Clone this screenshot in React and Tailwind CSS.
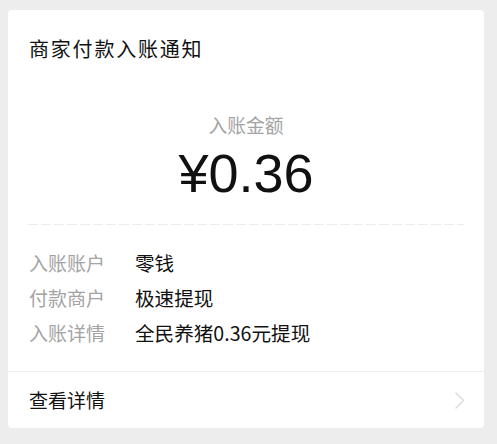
import React from "react";

const font = { fontFamily: '"Noto Sans CJK SC", "Noto Sans", sans-serif' };

function Row({ label, value }) {
  return (
    <div className="flex items-center h-[35px]">
      <div className="w-[106px] text-[19px] text-[#a3a3a3]">{label}</div>
      <div className="text-[19.6px] text-[#111111]">{value}</div>
    </div>
  );
}

export default function App() {
  return (
    <div
      className="w-[497px] h-[444px] bg-[#ededed] pt-[10px] pl-[8px]"
      style={font}
    >
      <div className="w-[476px] h-[418px] bg-white rounded-[4px] flex flex-col">
        <div className="pt-[25px] pl-[21px] leading-[28px] text-[20px] tracking-[1.8px] text-[#111111]">
          商家付款入账通知
        </div>
        <div className="mt-[49px] text-center leading-[26px] text-[18.8px] text-[#a3a3a3]">
          入账金额
        </div>
        <div
          className="mt-[5px] text-center leading-[60px] text-[54px] text-[#111111]"
          style={{ fontFamily: '"Liberation Sans", Arial, sans-serif' }}
        >
          ¥0.36
        </div>
        <div className="mt-[21px] mx-[20px] h-[1px] bg-[linear-gradient(to_right,#ececec_10px,transparent_10px)] bg-[length:13px_1px]" />
        <div className="mt-[20px] pl-[21px] leading-[35px]">
          <Row label="入账账户" value="零钱" />
          <Row label="付款商户" value="极速提现" />
          <Row label="入账详情" value="全民养猪0.36元提现" />
        </div>
        <div className="mt-[21px] h-[1px] bg-[#ededed]" />
        <div className="flex-1 flex items-center justify-between pl-[21px] pr-[19px]">
          <div className="text-[19px] text-[#111111]">查看详情</div>
          <svg width="10" height="17" viewBox="0 0 10 17" fill="none">
            <path
              d="M1 1l7.5 7.5L1 16"
              stroke="#dcdcdc"
              strokeWidth="1.5"
              strokeLinecap="round"
              strokeLinejoin="round"
            />
          </svg>
        </div>
      </div>
    </div>
  );
}
